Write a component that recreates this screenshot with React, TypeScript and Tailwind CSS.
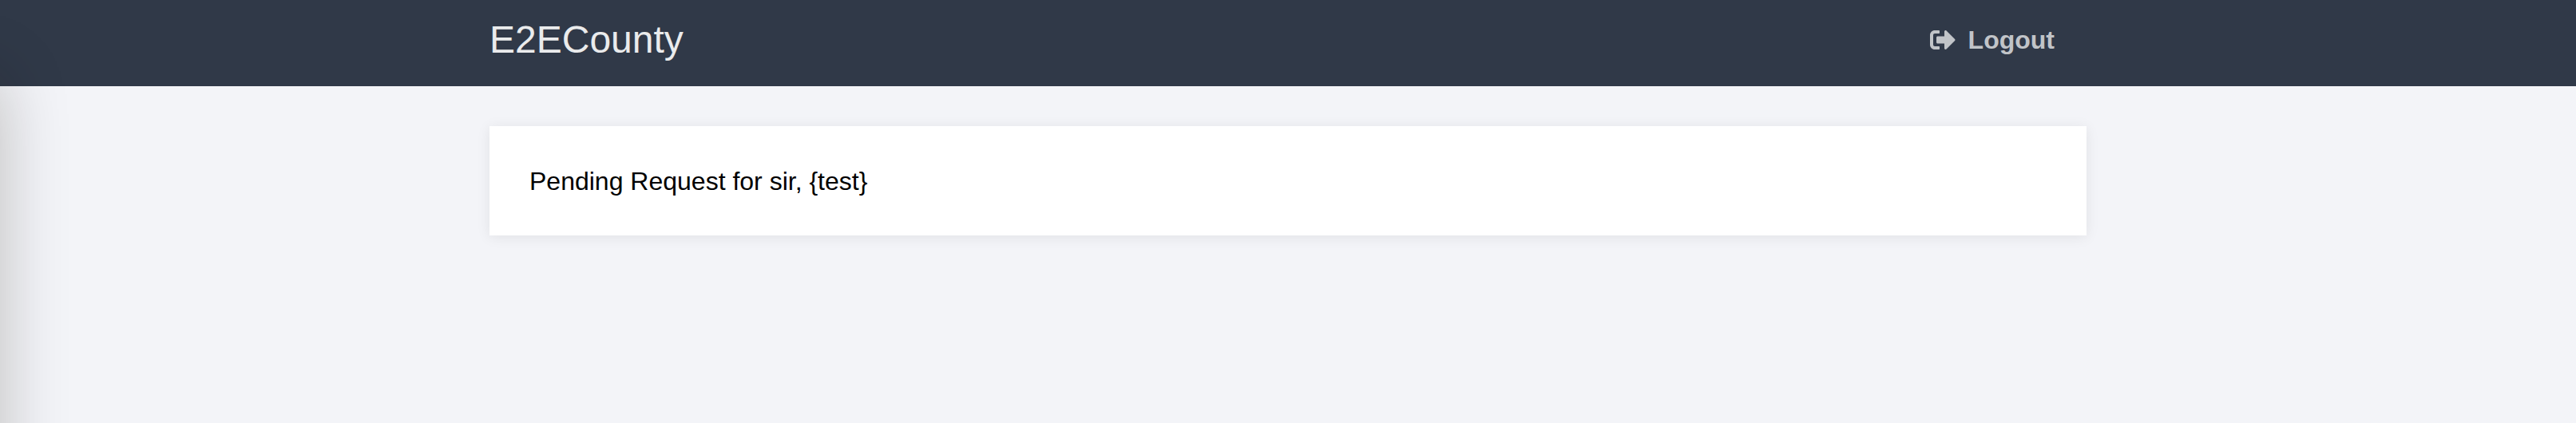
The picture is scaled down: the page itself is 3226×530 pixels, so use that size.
import { FaSignOutAlt } from "react-icons/fa";

export default function App() {
  return (
    <div className="relative min-h-screen overflow-hidden bg-[#f3f4f8] font-['Liberation_Sans',Arial,sans-serif] text-black">
      <header className="bg-[#303948]">
        <div className="mx-auto flex h-[108px] max-w-[2000px] items-center justify-between pr-10 pb-2">
          <a href="#home" className="text-5xl text-[#eaebec]">
            E2ECounty
          </a>
          <button type="button" className="flex items-center gap-4 text-[32px] font-bold text-[#c1c4c8]">
            <FaSignOutAlt aria-hidden="true" />
            Logout
          </button>
        </div>
      </header>

      <main className="mx-auto mt-[50px] max-w-[2000px] bg-white px-[50px] pt-[51px] pb-[49px] shadow-[0_2px_16px_rgba(0,0,0,0.08)]">
        <p className="text-[32px] leading-[37px]">Pending Request for sir, {"{test}"}</p>
      </main>

      {/* Closed drawer: parked past the left edge, only its shadow shows */}
      <aside
        aria-hidden="true"
        className="pointer-events-none absolute top-24 right-full -bottom-32 w-[600px] bg-white shadow-[0_0_80px_rgba(20,18,0,0.24)]"
      />
    </div>
  );
}
